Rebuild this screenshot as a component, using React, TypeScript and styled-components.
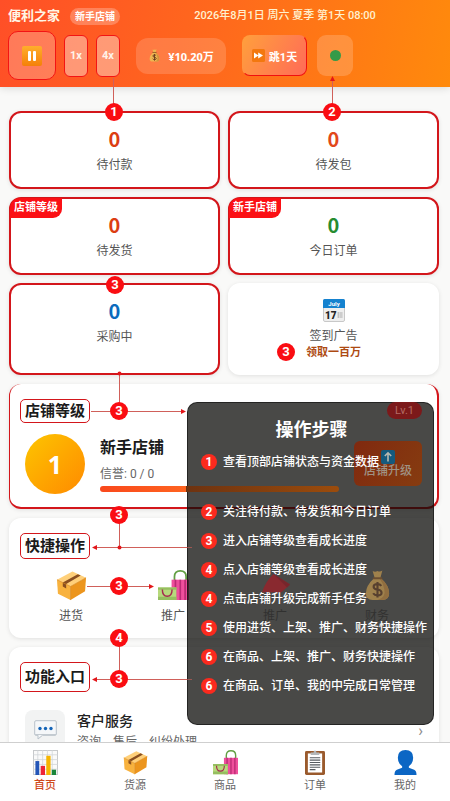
import React from "react";
import styled, { createGlobalStyle, css } from "styled-components";

const GlobalStyle = createGlobalStyle`
  * { box-sizing: border-box; }
  body { margin: 0; background: #f9f9f8; }
  body, button { font-family: Roboto, "Noto Sans CJK SC", sans-serif; }
  button { border: 0; padding: 0; margin: 0; background: none; color: inherit; cursor: pointer; }
  a { color: inherit; text-decoration: none; }
  h2, h3, p, ol { margin: 0; padding: 0; }
  svg { display: block; flex: none; }
`;

const RED = "#d3161b";

/* ---------- frame ---------- */

const Page = styled.div`
  height: 100vh;
  display: flex;
  flex-direction: column;
`;

const Scroller = styled.div`
  flex: 1;
  min-height: 0;
  overflow-y: auto;
  scrollbar-width: none;
`;

const Canvas = styled.div`
  position: relative;
`;

/* ---------- header ---------- */

const Header = styled.header`
  display: flex;
  flex-direction: column;
  gap: 6px;
  padding: 7px 0 7px 8px;
  color: #fff;
  background: linear-gradient(100deg, #ff4f27 0%, #ff6a1c 50%, #ff8a0c 100%);
  box-shadow: 0 1px 8px rgba(0, 0, 0, 0.14);
`;

const TitleRow = styled.div`
  display: flex;
  align-items: center;
  height: 18px;
`;

const ShopName = styled.span`
  font-size: 13px;
  font-weight: 700;
  line-height: 18px;
  color: #fff6e6;
`;

const ShopBadge = styled.span`
  margin-left: 10px;
  padding: 0 5px;
  border-radius: 9px;
  font-size: 10px;
  font-weight: 700;
  line-height: 17px;
  background: rgba(255, 255, 255, 0.25);
`;

const GameDate = styled.time`
  flex: 1;
  text-align: center;
  font-size: 11px;
  font-weight: 500;
  line-height: 18px;
  color: #fff1cf;
`;

const ControlRow = styled.div`
  display: flex;
  align-items: center;
  gap: 16px;
`;

const ControlGroup = styled.div<{ $gap: number }>`
  display: flex;
  align-items: center;
  gap: ${(p) => p.$gap}px;
`;

const PauseButton = styled.button`
  display: grid;
  place-items: center;
  width: 48px;
  height: 49px;
  border: 1px solid #f31414;
  border-radius: 10px;
  background: rgba(255, 255, 255, 0.24);
`;

const SpeedButton = styled.button`
  width: 24px;
  height: 42px;
  border: 1px solid #f31414;
  border-radius: 6px;
  font-size: 11px;
  font-weight: 700;
  color: #fff3ea;
  background: rgba(255, 255, 255, 0.38);
`;

const Funds = styled.div`
  display: flex;
  align-items: center;
  justify-content: center;
  gap: 7px;
  width: 90px;
  height: 36px;
  border-radius: 12px;
  font-family: "Noto Sans", "Noto Sans CJK SC", sans-serif;
  font-size: 11px;
  font-weight: 700;
  background: rgba(255, 255, 255, 0.16);
`;

const SkipButton = styled.button`
  display: flex;
  align-items: center;
  justify-content: center;
  gap: 4px;
  width: 65px;
  height: 41px;
  border-radius: 8px;
  border: 1px solid transparent;
  border-right-color: #f01010;
  border-bottom-color: #f01010;
  font-size: 11px;
  font-weight: 700;
  color: #fff;
  background: linear-gradient(120deg, #ffa03c, #ff6a58) border-box;
`;

const StatusBox = styled.div`
  display: grid;
  place-items: center;
  width: 36px;
  height: 41px;
  border-radius: 9px;
  background: rgba(255, 255, 255, 0.18);
`;

const StatusDot = styled.span`
  width: 11px;
  height: 11px;
  border-radius: 50%;
  background: #349a48;
`;

/* ---------- cards ---------- */

const Main = styled.main`
  display: flex;
  flex-direction: column;
  gap: 9px;
  padding: 24px 11px 0 9px;
`;

const cardBase = css`
  position: relative;
  border-radius: 12px;
  background: #fff;
  box-shadow: 0 1px 4px rgba(0, 0, 0, 0.1);
`;

const StatGrid = styled.section`
  display: grid;
  grid-template-columns: 1fr 1fr;
  gap: 8px;
`;

const StatCard = styled.article<{ $tall?: boolean; $plain?: boolean }>`
  ${cardBase}
  display: flex;
  flex-direction: column;
  align-items: center;
  min-height: ${(p) => (p.$tall ? 92 : 78)}px;
  padding-top: 14px;
  border: 2px solid ${(p) => (p.$plain ? "#fff" : RED)};
`;

const StatValue = styled.strong<{ $color: string }>`
  font-family: "Noto Sans CJK SC", sans-serif;
  font-size: 20px;
  font-weight: 700;
  line-height: 24px;
  color: ${(p) => p.$color};
`;

const StatLabel = styled.span`
  margin-top: 5px;
  font-size: 12px;
  line-height: 18px;
  color: #555;
`;

const AdReward = styled.span`
  font-size: 11px;
  font-weight: 700;
  line-height: 15px;
  color: #ad4a12;
`;

const CornerTag = styled.span`
  position: absolute;
  top: -1px;
  left: -1px;
  padding: 0 4px;
  border-radius: 10px 0 9px 0;
  font-size: 11px;
  font-weight: 700;
  line-height: 20px;
  color: #fff;
  background: #fb1015;
`;

const Heading = styled.h2<{ $height: number }>`
  align-self: flex-start;
  padding: 0 4px;
  border: 1px solid ${RED};
  border-radius: 5px;
  font-size: 15px;
  font-weight: 700;
  line-height: ${(p) => p.$height - 2}px;
  color: #1b1b1b;
`;

const LevelCard = styled.section`
  ${cardBase}
  display: flex;
  flex-direction: column;
  min-height: 125px;
  padding: 15px 15px 0 10px;
  border: solid ${RED};
  border-width: 0 2px 2px 1px;
`;

const LevelBody = styled.div`
  display: flex;
  align-items: flex-start;
  gap: 15px;
  padding: 11px 0 0 5px;
`;

const LevelCircle = styled.div`
  display: grid;
  place-items: center;
  flex: none;
  width: 60px;
  height: 60px;
  border-radius: 50%;
  font-family: "Noto Sans", sans-serif;
  font-size: 25px;
  font-weight: 700;
  color: #fff;
  background: linear-gradient(135deg, #fdc500, #ff8a00);
`;

const LevelInfo = styled.div`
  flex: 1;
  display: flex;
  flex-direction: column;
`;

const LevelName = styled.h3`
  margin-top: 3px;
  font-size: 16px;
  font-weight: 700;
  line-height: 22px;
  color: #1b1b1b;
`;

const Credit = styled.p`
  margin-top: 6px;
  font-size: 12px;
  line-height: 18px;
  color: #666;
`;

const Progress = styled.div`
  position: relative;
  z-index: 2;
  height: 6px;
  margin-top: 3px;
  border-radius: 3px;
  background: linear-gradient(90deg, #f9481c 0%, #ff6420 36%, #6d3210 36%, #9c4c0c 100%);
`;

const UpgradeButton = styled.button`
  position: relative;
  z-index: 2;
  display: flex;
  flex-direction: column;
  align-items: center;
  justify-content: center;
  flex: none;
  width: 68px;
  height: 45px;
  margin-top: 7px;
  border-radius: 6px;
  font-size: 12px;
  font-weight: 500;
  line-height: 14px;
  color: #a09284;
  background: linear-gradient(120deg, #80290f, #863c10);
`;

const LevelPill = styled.span`
  position: absolute;
  z-index: 2;
  top: 18px;
  right: 15px;
  padding: 0 8px;
  border-radius: 9px;
  font-size: 11px;
  line-height: 17px;
  color: #b46c64;
  background: #7c191a;
`;

/* ---------- steps panel ---------- */

const StepsPanel = styled.aside`
  position: absolute;
  top: 18px;
  left: 177px;
  right: 3px;
  padding: 15px 12px 29px 14px;
  color: #fff;
  &::before {
    content: "";
    position: absolute;
    inset: 0;
    z-index: 1;
    border: 1px solid rgba(20, 20, 20, 0.7);
    border-radius: 10px;
    background: rgba(9, 9, 7, 0.74);
  }
`;

const StepsTitle = styled.h2`
  position: relative;
  z-index: 3;
  font-size: 18px;
  font-weight: 700;
  line-height: 26px;
  text-align: center;
`;

const StepList = styled.ol`
  position: relative;
  z-index: 3;
  display: flex;
  flex-direction: column;
  gap: 9px;
  margin-top: 9px;
  list-style: none;
`;

const Step = styled.li<{ $spaced?: boolean }>`
  display: flex;
  align-items: center;
  gap: 6px;
  margin-bottom: ${(p) => (p.$spaced ? 21 : 0)}px;
  font-size: 12px;
  font-weight: 500;
  line-height: 20px;
  white-space: nowrap;
`;

const StepNumber = styled.span`
  flex: none;
  width: 16px;
  border-radius: 50%;
  font-size: 12px;
  font-weight: 700;
  line-height: 16px;
  text-align: center;
  background: #fb2a1e;
`;

/* ---------- quick actions and entries ---------- */

const Section = styled.section<{ $height: number }>`
  ${cardBase}
  display: flex;
  flex-direction: column;
  min-height: ${(p) => p.$height}px;
  padding: 15px 11px 0;
`;

const ActionGrid = styled.div`
  display: grid;
  grid-template-columns: repeat(4, 1fr);
  margin-top: 11px;
`;

const Action = styled.button<{ $muted?: boolean }>`
  display: flex;
  flex-direction: column;
  align-items: center;
  gap: 6px;
  font-size: 12px;
  line-height: 18px;
  color: ${(p) => (p.$muted ? "#1c1c1c" : "#555")};
  ${(p) =>
    p.$muted &&
    css`
      position: relative;
      z-index: 2;
      opacity: 0.52;
    `}
`;

const Entry = styled.a`
  display: flex;
  align-items: flex-start;
  gap: 12px;
  padding: 18px 5px 16px;
`;

const EntryIcon = styled.span`
  display: grid;
  place-items: center;
  width: 40px;
  height: 40px;
  border-radius: 8px;
  background: #f2f3f3;
`;

const EntryText = styled.span`
  flex: 1;
  display: flex;
  flex-direction: column;
`;

const EntryTitle = styled.span`
  font-size: 14px;
  font-weight: 500;
  line-height: 22px;
  color: #222;
`;

const EntryNote = styled.span`
  font-size: 12px;
  line-height: 20px;
  color: #666;
`;

const Chevron = styled.span`
  font-size: 16px;
  line-height: 42px;
  color: #888;
`;

/* ---------- tab bar ---------- */

const TabBar = styled.nav`
  position: relative;
  z-index: 5;
  display: grid;
  grid-template-columns: repeat(5, 1fr);
  padding: 7px 0 7px;
  border-top: 1px solid #cfcfcf;
  background: #fff;
`;

const Tab = styled.a<{ $active?: boolean }>`
  display: flex;
  flex-direction: column;
  align-items: center;
  gap: 3px;
  font-size: 11px;
  font-weight: ${(p) => (p.$active ? 500 : 400)};
  line-height: 16px;
  color: ${(p) => (p.$active ? "#cf4a1c" : "#666")};
`;

/* ---------- annotations ---------- */

const Arrows = styled.svg`
  position: absolute;
  top: 0;
  left: 0;
  z-index: 4;
  overflow: visible;
  pointer-events: none;
`;

const Marker = styled.span<{ $x: number; $y: number }>`
  position: absolute;
  z-index: 4;
  left: ${(p) => p.$x}px;
  top: ${(p) => p.$y}px;
  width: 18px;
  margin: -9px 0 0 -9px;
  border-radius: 50%;
  font-size: 13px;
  font-weight: 700;
  line-height: 18px;
  text-align: center;
  color: #fff;
  background: #fa0d12;
`;

/* ---------- icons ---------- */

const PauseIcon = () => (
  <svg width="20" height="20" viewBox="0 0 20 20">
    <defs>
      <linearGradient id="pz" x1="0" y1="0" x2="0" y2="1">
        <stop offset="0" stopColor="#ffae2c" />
        <stop offset="1" stopColor="#f58008" />
      </linearGradient>
    </defs>
    <rect width="20" height="20" rx="2" fill="url(#pz)" />
    <rect x="6" y="5" width="3" height="10" rx="1" fill="#fff" />
    <rect x="11" y="5" width="3" height="10" rx="1" fill="#fff" />
  </svg>
);

const ForwardIcon = () => (
  <svg width="13" height="13" viewBox="0 0 13 13">
    <rect width="13" height="13" rx="1.5" fill="#f3780f" />
    <path d="M2 3.4 6.5 6.5 2 9.6ZM6.2 3.4 11 6.5 6.2 9.6Z" fill="#fff" />
  </svg>
);

const MoneyBag = ({ size }: { size: number }) => (
  <svg width={size} height={size} viewBox="0 0 32 32">
    <path d="M11 1q2.500 1.500 5 0 2.500 1.500 5-.5l-2 7.500q9 8 9 16 0 7-7 7H11q-7 0-7-7 0-8 9-16Z" fill="#efb552" />
    <path d="M19 8q9 8 9 16 0 7-7 7h-5q9-3 7-11-1-6-5-11.500Z" fill="#d4913a" />
    <path d="M12 8.500h8" stroke="#8a5420" strokeWidth="2" strokeLinecap="round" />
    <path d="M20 16.500q-1.500-2-4-2-4 0-4 2.700 0 2.300 4 3 4.200.8 4.200 3.200 0 2.800-4.200 2.800-3 0-4.500-2.200M16 12.500v16" fill="none" stroke="#65381a" strokeWidth="2.200" />
  </svg>
);

const CalendarIcon = () => (
  <svg width="22" height="23" viewBox="0 0 22 23">
    <rect x=".5" y=".5" width="21" height="22" rx="1.500" fill="#eeeeee" stroke="#c8c8c8" />
    <path d="M0 1.500Q0 0 1.500 0h19Q22 0 22 1.500V9H0Z" fill="#1582cf" />
    <text x="11" y="7" textAnchor="middle" fontSize="6" fontWeight="700" fill="#fff">July</text>
    <text x="2" y="19.500" fontSize="10" fontWeight="900" fill="#222">17</text>
    <path d="M14 14h6M14 16h6M14 18h6M15.500 13v6M18 13v6" stroke="#b4b4b4" strokeWidth=".7" />
  </svg>
);

const PackageIcon = ({ size }: { size: number }) => (
  <svg width={size} height={size} viewBox="0 0 32 32">
    <path d="M1 10 17 1.500 31 8 15 17Z" fill="#ffd07a" />
    <path d="M1 10 15 17V31L2 24.500Z" fill="#f8b23e" />
    <path d="M15 17 31 8 30 22 15 31Z" fill="#ec951d" />
    <path d="m7 12.800 15.500-8.500 3 1.400L10.500 14.500v4.500L7 17Z" fill="#8a4f20" />
    <path d="M1 10 15 17 31 8M15 17V31" fill="none" stroke="#d98a20" strokeWidth=".7" />
  </svg>
);

const BagsIcon = ({ size }: { size: number }) => (
  <svg width={size} height={size} viewBox="0 0 32 32">
    <path d="M17 12V7q0-6 6-6t6 6v5" fill="none" stroke="#62a043" strokeWidth="1.800" />
    <path d="M14 10h18v21H14Z" fill="#ee4f9c" />
    <path d="M18 10v21M23 10v21M28 10v21" stroke="#ba2b74" strokeWidth="1.700" />
    <path d="M0 18h19v13H0Z" fill="#b7d97c" />
    <path d="M0 18h19v2.500H0ZM0 27.500h19V31H0Z" fill="#96bf60" />
    <path d="M4.500 20q0 7 5 7t5-7" fill="none" stroke="#a52d50" strokeWidth="1.500" />
  </svg>
);

const FlagIcon = () => (
  <svg width="31" height="31" viewBox="0 0 32 32">
    <path d="M2 23Q6 11 14 4L31 15 22 23Z" fill="#c40c1a" />
    <path d="M14 4 31 15l-3 3Z" fill="#a00814" />
  </svg>
);

const UpIcon = () => (
  <svg width="14" height="14" viewBox="0 0 14 14">
    <rect width="14" height="14" rx="2" fill="#155a7d" />
    <path d="M7 11.500V3M3.800 6 7 2.800 10.200 6" fill="none" stroke="#b8b8b0" strokeWidth="1.600" />
  </svg>
);

const BubbleIcon = () => (
  <svg width="23" height="20" viewBox="0 0 23 20">
    <path d="M2 .7h19q1.300 0 1.300 1.300v12q0 1.300-1.300 1.300H8.500L4 19v-3.700H2Q.7 15.300.7 14V2Q.7.7 2 .7Z" fill="#f5f7f9" stroke="#b9c2ca" />
    <path d="M1 14.500h21" stroke="#c3cad0" />
    <circle cx="6" cy="8.500" r="1.700" fill="#1565b8" />
    <circle cx="11.500" cy="8.500" r="1.700" fill="#1565b8" />
    <circle cx="17" cy="8.500" r="1.700" fill="#1565b8" />
  </svg>
);

const ChartIcon = () => (
  <svg width="25" height="25" viewBox="0 0 26 26">
    <rect x=".5" y=".5" width="25" height="25" fill="#fafafa" stroke="#c5c8ca" />
    <path d="M5 0v26M10 0v26M15 0v26M20 0v26M0 5h26M0 10h26M0 15h26M0 20h26" stroke="#d0d4d6" strokeWidth=".8" />
    <path d="M2.500 11.500h4V26h-4Z" fill="#2456b8" />
    <path d="M8 16.500h4.500V26H8Z" fill="#ee2536" />
    <path d="M13.800 6h4.500v20h-4.500Z" fill="#f7b500" />
    <path d="M19.500 20.500H24V26h-4.500Z" fill="#19853a" />
  </svg>
);

const ClipboardIcon = () => (
  <svg width="20" height="25" viewBox="0 0 21 26">
    <rect y="1" width="21" height="25" rx="1.500" fill="#9a5a2c" />
    <rect x="3" y="3.500" width="15" height="20" fill="#fff" />
    <path d="M6 2.500h3q0-2 1.500-2T12 2.500h3v2.700H6Z" fill="#b4b8ba" />
    <path d="M5 8h11M5 10.500h11M5 13h11M5 15.500h11M5 18h11M5 20.500h6" stroke="#555b60" strokeWidth="1.100" />
  </svg>
);

const PersonIcon = () => (
  <svg width="23" height="25" viewBox="0 0 24 26">
    <path d="M12 0q8 0 8 8 0 6-4.500 9v1.500l5.500 2q2.500 1 2.500 5.500H.5q0-4.500 2.500-5.500l5.500-2V17Q4 14 4 8q0-8 8-8Z" fill="#0b66c4" />
  </svg>
);

/* ---------- data ---------- */

const stats = [
  { value: "0", label: "待付款", color: "#dc3d12" },
  { value: "0", label: "待发包", color: "#e2481a" },
  { value: "0", label: "待发货", color: "#dc3d12", tag: "店铺等级" },
  { value: "0", label: "今日订单", color: "#268c30", tag: "新手店铺" },
  { value: "0", label: "采购中", color: "#0c6bbd", tall: true },
];

const steps = [
  [1, "查看顶部店铺状态与资金数据"],
  [2, "关注待付款、待发货和今日订单"],
  [3, "进入店铺等级查看成长进度"],
  [4, "点入店铺等级查看成长进度"],
  [4, "点击店铺升级完成新手任务"],
  [5, "使用进货、上架、推广、财务快捷操作"],
  [6, "在商品、上架、推广、财务快捷操作"],
  [6, "在商品、订单、我的中完成日常管理"],
] as const;

const actions = [
  { label: "进货", icon: <PackageIcon size={31} /> },
  { label: "推广", icon: <BagsIcon size={31} /> },
  { label: "推广", icon: <FlagIcon />, muted: true },
  { label: "财务", icon: <MoneyBag size={31} />, muted: true },
];

const tabs = [
  { label: "首页", icon: <ChartIcon />, active: true },
  { label: "货源", icon: <PackageIcon size={25} /> },
  { label: "商品", icon: <BagsIcon size={25} /> },
  { label: "订单", icon: <ClipboardIcon /> },
  { label: "我的", icon: <PersonIcon /> },
];

const markers = [
  [1, 114, 112],
  [2, 332, 112],
  [3, 115, 285],
  [3, 286, 352],
  [3, 119, 411],
  [3, 119, 515],
  [3, 119, 586],
  [4, 119, 638],
  [3, 119, 679],
] as const;

const Annotations = () => (
  <>
    <Arrows width="100%" height="100%" aria-hidden="true">
      <g stroke="#d0605a" strokeWidth="1" fill="none">
        <path d="M113.500 78V106M332.500 79V106M119.500 374V406M91 411.500H182M119.500 520V547M96 547.500H187M87 586.500H150M119.500 645V672M96 679.500H187" />
        <path d="M187 547.500H192M187 679.500H192" opacity=".6" />
      </g>
      <g fill="#e3161a">
        <path d="M332.500 76l2.500 5h-5ZM186 411.500l-5-2.500v5ZM92 547.500l5-2.500v5ZM154 586.500l-5-2.500v5ZM92 679.500l5-2.500v5Z" />
        <circle cx="119.500" cy="373.500" r="2" />
        <circle cx="119.500" cy="547.500" r="2" />
      </g>
    </Arrows>
    {markers.map(([n, x, y]) => (
      <Marker key={`${x}-${y}`} $x={x} $y={y}>
        {n}
      </Marker>
    ))}
  </>
);

export default function App() {
  return (
    <Page>
      <GlobalStyle />
      <Scroller>
        <Canvas>
          <Header>
            <TitleRow>
              <ShopName>便利之家</ShopName>
              <ShopBadge>新手店铺</ShopBadge>
              <GameDate>2026年8月1日 周六 夏季 第1天 08:00</GameDate>
            </TitleRow>
            <ControlRow>
              <ControlGroup $gap={8}>
                <PauseButton aria-label="暂停"><PauseIcon /></PauseButton>
                <SpeedButton>1x</SpeedButton>
                <SpeedButton>4x</SpeedButton>
              </ControlGroup>
              <Funds><MoneyBag size={13} />¥10.20万</Funds>
              <ControlGroup $gap={10}>
                <SkipButton><ForwardIcon />跳1天</SkipButton>
                <StatusBox><StatusDot /></StatusBox>
              </ControlGroup>
            </ControlRow>
          </Header>

          <Main>
            <StatGrid>
              {stats.map((s) => (
                <StatCard key={s.label} $tall={s.tall}>
                  {s.tag && <CornerTag>{s.tag}</CornerTag>}
                  <StatValue $color={s.color}>{s.value}</StatValue>
                  <StatLabel>{s.label}</StatLabel>
                </StatCard>
              ))}
              <StatCard $tall $plain>
                <CalendarIcon />
                <StatLabel>签到广告</StatLabel>
                <AdReward>领取一百万</AdReward>
              </StatCard>
            </StatGrid>

            <LevelCard>
              <Heading $height={24}>店铺等级</Heading>
              <LevelPill>Lv.1</LevelPill>
              <LevelBody>
                <LevelCircle>1</LevelCircle>
                <LevelInfo>
                  <LevelName>新手店铺</LevelName>
                  <Credit>信誉: 0 / 0</Credit>
                  <Progress role="progressbar" aria-label="信誉" />
                </LevelInfo>
                <UpgradeButton><UpIcon />店铺升级</UpgradeButton>
              </LevelBody>
              <StepsPanel>
                <StepsTitle>操作步骤</StepsTitle>
                <StepList>
                  {steps.map(([n, text], i) => (
                    <Step key={text} $spaced={i === 0}>
                      <StepNumber>{n}</StepNumber>
                      {text}
                    </Step>
                  ))}
                </StepList>
              </StepsPanel>
            </LevelCard>

            <Section $height={120}>
              <Heading $height={26}>快捷操作</Heading>
              <ActionGrid>
                {actions.map((a, i) => (
                  <Action key={i} $muted={a.muted}>
                    {a.icon}
                    {a.label}
                  </Action>
                ))}
              </ActionGrid>
            </Section>

            <Section $height={120}>
              <Heading $height={30}>功能入口</Heading>
              <Entry href="#service">
                <EntryIcon><BubbleIcon /></EntryIcon>
                <EntryText>
                  <EntryTitle>客户服务</EntryTitle>
                  <EntryNote>咨询、售后、纠纷处理</EntryNote>
                </EntryText>
                <Chevron>›</Chevron>
              </Entry>
            </Section>
          </Main>
          <Annotations />
        </Canvas>
      </Scroller>

      <TabBar>
        {tabs.map((t) => (
          <Tab key={t.label} href="#" $active={t.active}>
            {t.icon}
            {t.label}
          </Tab>
        ))}
      </TabBar>
    </Page>
  );
}
